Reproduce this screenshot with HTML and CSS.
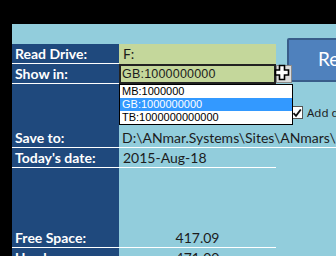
FILE: index.html
```html
<!DOCTYPE html>
<html>
<head>
<meta charset="utf-8">
<link rel="stylesheet" href="styles.css">
</head>
<body>
<div class="screen">
  <div class="topbar"></div>
  <div class="main">
    <div class="leftbar"></div>
    <div class="sheet">
      <div class="row r-top"></div>
      <div class="row r20">
        <div class="label line">Read Drive:</div>
        <div class="value green">F:</div>
      </div>
      <div class="row r20">
        <div class="label line">Show in:</div>
        <div class="value green active">GB:1000000000</div>
      </div>
      <div class="row r-gap1">
        <div class="label"></div>
      </div>
      <div class="row r20 line-all">
        <div class="label">Save to:</div>
        <div class="value wide">D:\ANmar.Systems\Sites\ANmars\</div>
      </div>
      <div class="row r20">
        <div class="label line">Today's date:</div>
        <div class="value line">2015-Aug-18</div>
      </div>
      <div class="row r-gap2">
        <div class="label"></div>
      </div>
      <div class="row r20">
        <div class="label line">Free Space:</div>
        <div class="value line center">417.09</div>
      </div>
      <div class="row r20">
        <div class="label">Used:</div>
        <div class="value center">471.00</div>
      </div>

      <div class="button">Refresh</div>
      <div class="checkwrap">
        <span class="checkbox">
          <svg width="10" height="10" viewBox="0 0 10 10"><path d="M1.5 5.2 L4 7.8 L8.8 1.5" fill="none" stroke="#111" stroke-width="1.8"/></svg>
        </span>
        <span class="checklabel">Add date</span>
      </div>
      <div class="ddbtn"></div>
      <ul class="droplist">
        <li>MB:1000000</li>
        <li class="sel">GB:1000000000</li>
        <li>TB:1000000000000</li>
      </ul>
      <svg class="cursor" width="16" height="17" viewBox="0 0 16 17">
        <path d="M5.5 1.5 H10.5 V6 H14.5 V11 H10.5 V15.5 H5.5 V11 H1.5 V6 H5.5 Z" fill="#fff" stroke="#000" stroke-width="1.6"/>
      </svg>
    </div>
  </div>
</div>
</body>
</html>
```

FILE: styles.css
```css
* { box-sizing: border-box; }
html, body { margin: 0; padding: 0; }
body {
  width: 336px;
  height: 256px;
  overflow: hidden;
  background: #000;
  font-family: Lato, "Open Sans", sans-serif;
}
.screen { width: 336px; height: 256px; display: flex; flex-direction: column; }
.topbar { height: 24px; background: #000; flex: none; }
.main { flex: 1; display: flex; min-height: 0; }
.leftbar { width: 12px; background: #000; flex: none; }
.sheet {
  position: relative;
  flex: 1;
  background: #92cddc;
  overflow: hidden;
  display: flex;
  flex-direction: column;
}
.row { display: flex; flex: none; }
.r-top { height: 20px; }
.r20 { height: 20px; }
.r-gap1 { height: 44px; }
.r-gap2 { height: 60px; }
.r-gap1 .label, .r-gap2 .label { height: 100%; }
.label {
  width: 107px;
  flex: none;
  background: #1f497d;
  color: #fff;
  font-weight: 700;
  font-size: 14px;
  line-height: 19px;
  padding-left: 3px;
  white-space: nowrap;
}
.value {
  width: 157px;
  flex: none;
  color: #1c1c1c;
  font-size: 14px;
  line-height: 19px;
  padding-left: 4px;
  white-space: nowrap;
}
.value.wide { width: auto; flex: 1; overflow: hidden; padding-left: 3px; }
.value.center { text-align: center; padding-left: 0; }
.line { border-bottom: 1px solid #fff; }
.line-all { border-bottom: 1px solid #fff; }
.green { background: #c4d79b; }
.active {
  border: 2px solid #222;
  font-family: "Liberation Sans", Arial, sans-serif;
  font-size: 12.5px;
  line-height: 16px;
  padding-left: 1px;
  letter-spacing: 0.2px;
}
.button {
  position: absolute;
  left: 275px;
  top: 14px;
  width: 80px;
  height: 44px;
  background: #4f81bd;
  border: 2px solid #385d8a;
  border-radius: 2px;
  color: #fff;
  font-size: 19px;
  line-height: 38px;
  padding-left: 29px;
  white-space: nowrap;
}
.checkwrap {
  position: absolute;
  left: 279px;
  top: 81px;
  display: flex;
  align-items: center;
  gap: 4px;
  white-space: nowrap;
}
.checkbox {
  width: 12px;
  height: 13px;
  background: #fff;
  border: 1px solid #555;
  display: flex;
  align-items: center;
  justify-content: center;
}
.checklabel {
  font-family: "Noto Sans", sans-serif;
  font-size: 11.5px;
  color: #1c1c1c;
}
.ddbtn {
  position: absolute;
  left: 264px;
  top: 41px;
  width: 16px;
  height: 18px;
  background: #dcdcdc;
  border: 1px solid #8a8a8a;
}
.droplist {
  position: absolute;
  left: 107px;
  top: 60px;
  width: 174px;
  margin: 0;
  padding: 0;
  list-style: none;
  background: #fff;
  border: 1px solid #000;
  font-family: "Liberation Sans", Arial, sans-serif;
  font-size: 11px;
  color: #000;
}
.droplist li { height: 13px; line-height: 13px; padding-left: 2px; }
.droplist li.sel { background: #3399ff; color: #fff; }
.cursor { position: absolute; left: 262px; top: 40px; }
```
